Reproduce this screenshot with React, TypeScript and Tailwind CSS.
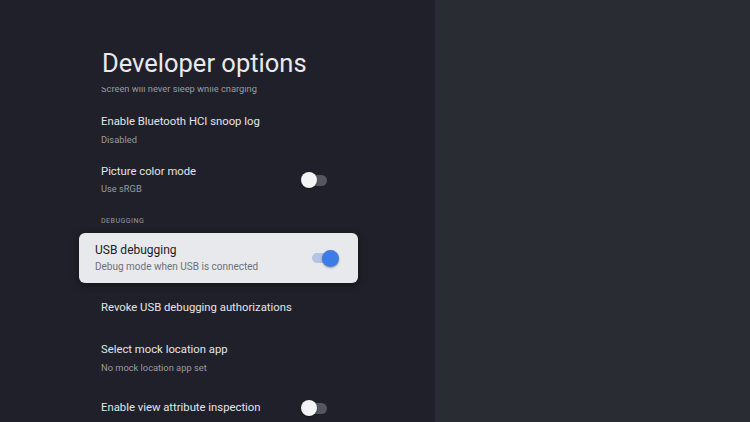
import React from 'react';

const Toggle: React.FC<{ on?: boolean }> = ({ on }) =>
  on ? (
    <div className="relative w-[27px] h-[17px] flex items-center">
      <div className="w-[26px] h-[10px] rounded-full bg-[#b3c3e3]" />
      <div className="absolute right-0 top-0 w-[17px] h-[17px] rounded-full bg-[#3d7ce6] shadow-[0_1px_2px_rgba(0,0,0,0.35)]" />
    </div>
  ) : (
    <div className="relative w-[26px] h-[16px] flex items-center justify-end">
      <div className="w-[19px] h-[11px] rounded-full bg-[#55575e]" />
      <div className="absolute left-0 top-0 w-[16px] h-[16px] rounded-full bg-[#f4f4f6] shadow-[0_1px_2px_rgba(0,0,0,0.4)]" />
    </div>
  );

const App: React.FC = () => {
  return (
    <div
      className="w-[750px] h-[422px] flex overflow-hidden bg-[#2a2c34]"
      style={{ fontFamily: 'Roboto, "Noto Sans", sans-serif' }}
    >
      {/* Settings panel */}
      <div className="w-[435px] h-full bg-[#1f2029] flex flex-col shadow-[2px_0_6px_rgba(0,0,0,0.25)]">
        <h1 className="pl-[102px] pt-[47px] h-[87px] text-[25.5px] leading-[32px] font-normal text-[#e9e9ec]">
          Developer options
        </h1>

        <div className="flex-1 overflow-hidden pl-[79px] w-[358px] box-content">
          <div className="w-[279px] flex flex-col">
            {/* clipped item */}
            <div className="-mt-[5px] px-[22px] text-[9.3px] leading-[14px] text-[#9a9ba2]">
              Screen will never sleep while charging
            </div>

            <div className="mt-[18px] px-[22px]">
              <div className="text-[11.3px] leading-[16px] text-[#e4e4e8]">Enable Bluetooth HCI snoop log</div>
              <div className="mt-[3px] text-[9.3px] leading-[14px] text-[#9a9ba2]">Disabled</div>
            </div>

            <div className="mt-[17px] pl-[22px] pr-[31px] flex items-center justify-between">
              <div>
                <div className="text-[11.3px] leading-[16px] text-[#e4e4e8]">Picture color mode</div>
                <div className="mt-[2px] text-[9.3px] leading-[14px] text-[#9a9ba2]">Use sRGB</div>
              </div>
              <Toggle />
            </div>

            <div className="mt-[20px] px-[22px] text-[7px] leading-[10px] tracking-[0.5px] text-[#9a9ba2] uppercase">
              Debugging
            </div>

            {/* focused card */}
            <div className="mt-[7px] h-[50px] rounded-[6px] bg-[#e8e9ed] pl-[16px] pr-[19px] flex items-center justify-between shadow-[0_2px_8px_rgba(0,0,0,0.4)]">
              <div>
                <div className="text-[12px] leading-[16px] text-[#202124]">USB debugging</div>
                <div className="mt-[2px] text-[10px] leading-[14px] text-[#6e7077]">Debug mode when USB is connected</div>
              </div>
              <Toggle on />
            </div>

            <div className="mt-[17px] px-[22px] text-[11.3px] leading-[16px] text-[#e4e4e8]">
              Revoke USB debugging authorizations
            </div>

            <div className="mt-[26px] px-[22px]">
              <div className="text-[11.3px] leading-[16px] text-[#e4e4e8]">Select mock location app</div>
              <div className="mt-[3px] text-[9.3px] leading-[14px] text-[#9a9ba2]">No mock location app set</div>
            </div>

            <div className="mt-[25px] pl-[22px] pr-[31px] flex items-center justify-between">
              <div className="text-[11.3px] leading-[16px] text-[#e4e4e8]">Enable view attribute inspection</div>
              <Toggle />
            </div>
          </div>
        </div>
      </div>

      {/* Empty side pane */}
      <div className="flex-1 h-full bg-[#2a2c34]" />
    </div>
  );
};

export default App;
